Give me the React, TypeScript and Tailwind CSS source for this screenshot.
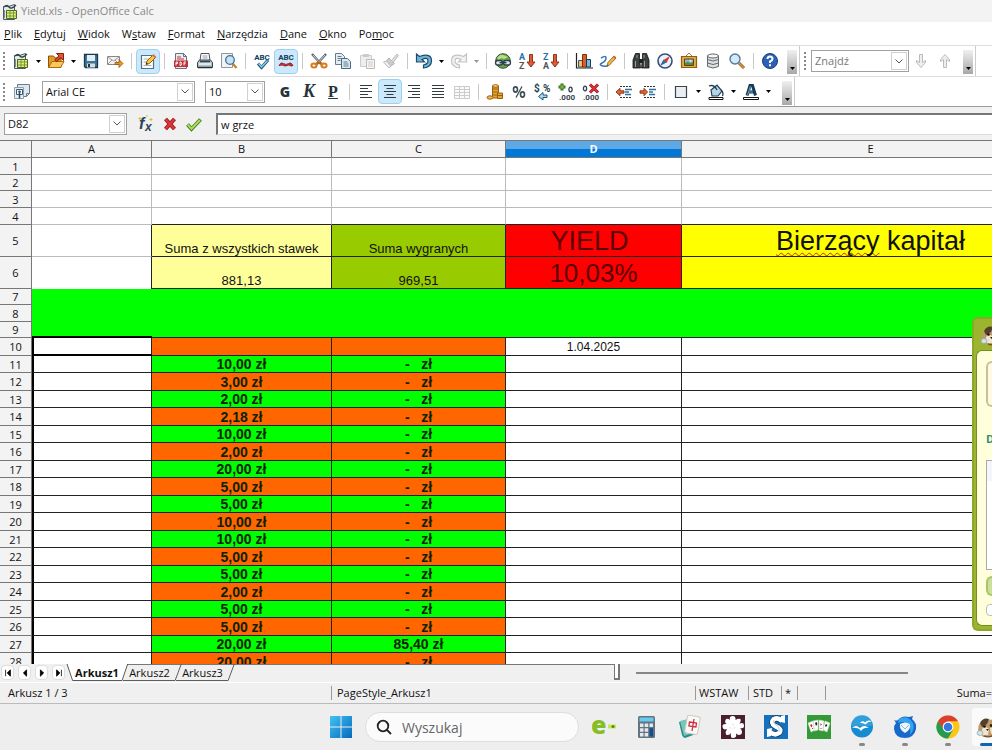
import type { ReactNode } from 'react'
import clsx from 'clsx'

interface IconProps {
  children: ReactNode
  size?: 'sm' | 'lg'
}

/** Toolbar icons are drawn on an 18 unit grid, taskbar icons on a 24 unit grid. */
function Icon({ children, size = 'sm' }: IconProps) {
  return (
    <svg
      viewBox={size === 'sm' ? '0 0 18 18' : '0 0 24 24'}
      className={clsx('shrink-0', size === 'sm' ? 'h-[18px] w-[18px]' : 'h-6 w-6')}
      fill="none"
      aria-hidden="true"
    >
      {children}
    </svg>
  )
}

const calcDoc = (
  <Icon>
    <path d="M2.500 3.500h5l6-2v15h-11z" fill="#e3eaec" stroke="#4c5b62" />
    <path d="M3 4q3-3 5 0t7-2" stroke="#33434b" strokeWidth="1.400" />
    <path d="M3.500 7v8" stroke="#7b8f99" />
    <path d="M5.500 7.500h10v8h-10z" fill="#d9f277" stroke="#4f6420" />
    <path d="M5.500 10h10M5.500 13h10M9 7.500v8M12.500 7.500v8" stroke="#6c8530" strokeWidth=".8" />
  </Icon>
)
const openFolder = (
  <Icon>
    <path d="M1.500 15.500V4h5l1.500 2h6v9.500z" fill="#e39a26" stroke="#8c520a" />
    <path d="M1.500 15.500 5 9.500h12l-3.500 6z" fill="#fcc956" stroke="#a8690f" />
    <path d="m8.500 9 5-5" stroke="#8c1f0c" strokeWidth="3.200" />
    <path d="M9.500 1.500h7v7z" fill="#e0593a" stroke="#8c1f0c" />
    <path d="m9 8.500 5.500-5.500" stroke="#e0593a" strokeWidth="1.600" />
  </Icon>
)
const save = (
  <Icon>
    <path d="M2.500 2.500h13v13h-12l-1-1z" fill="#3f7595" stroke="#16384c" strokeWidth="1.300" />
    <path d="M5 3h8v6H5z" fill="#e2eef5" />
    <path d="M5 11.500h8v4H5z" fill="#d8dde0" />
    <path d="M6 12h2v3H6z" fill="#16384c" />
  </Icon>
)
const mail = (
  <Icon>
    <path d="M1.500 4.500h12v8h-12z" fill="#f4f4f4" stroke="#888" />
    <path d="m2 5 5.500 4L13 5M2 12l4-4m7 4L9 8" stroke="#999" />
    <path d="M9 10.500h4v-3l4 4-4 4v-3H9z" fill="#e8962a" stroke="#93560d" strokeWidth=".8" />
  </Icon>
)
const edit = (
  <Icon>
    <path d="M2.500 3.500h12v13h-12z" fill="#fff" stroke="#52738a" strokeWidth="1.200" />
    <path d="M4.500 7h6M4.500 10h4M4.500 13.500h8" stroke="#9db2c0" />
    <path d="m7 12.500 1-3.500L14 3l2.500 2.500-6 6z" fill="#f8c93a" stroke="#8b6410" />
    <path d="m13 3.500 3 3L17.500 5l-3-3z" fill="#e96a56" />
    <path d="m7 12.500.500-2 1.500 1.500z" fill="#222" />
  </Icon>
)
const pdf = (
  <Icon>
    <path d="M3.500 1.500h8l3 3v12h-11z" fill="#e7ecef" stroke="#65757e" />
    <path d="M11.500 1.500v3h3" stroke="#65757e" />
    <path d="M5 5h4M5 7h7" stroke="#c4303a" />
    <path d="M2 8.500h14v6.500H2z" fill="#c4303a" />
    <path d="M4 13.500V10h1.500v1.500H4M8 10v3.500h1q1.500-1.700 0-3.500zM12 13.500V10h2M12 11.700h1.500" stroke="#fff" strokeWidth=".9" />
  </Icon>
)
const print = (
  <Icon>
    <path d="M5 1.500h8l1 7H4z" fill="#fff" stroke="#49565d" />
    <path d="M6.500 4h5M6.500 6h5" stroke="#999" />
    <path d="M1.500 10.500 3.500 8h11l2 2.500v5h-15z" fill="#b4c1c9" stroke="#31434d" />
    <path d="M4 9.500h10" stroke="#31434d" strokeWidth="1.500" />
    <path d="M3 12h12" stroke="#eef3f5" strokeWidth="1.500" />
    <path d="M2 15.500h14" stroke="#222f36" strokeWidth="1.500" />
  </Icon>
)
const preview = (
  <Icon>
    <path d="M1.500 1.500h11v14h-11z" fill="#f1f3f4" stroke="#8c989f" />
    <path d="m12.500 11.500 4 4.500" stroke="#c8842d" strokeWidth="2.400" />
    <circle cx="10" cy="8" r="4.300" fill="#c5e1f3" stroke="#3f7195" strokeWidth="1.300" />
  </Icon>
)
/** Shared lettering of the two spelling icons. */
const abc = (
  <text x="9" y="8" textAnchor="middle" fontSize="8" fontWeight="700" fill="#173d58" fontFamily="Roboto, sans-serif">
    ABC
  </text>
)
const spell = (
  <Icon>
    {abc}
    <path d="m5 11.500 3.500 4L15 8" stroke="#1c577b" strokeWidth="3" />
    <path d="m5.500 11.500 3 3.500L14.500 8.500" stroke="#8fd0f0" strokeWidth="1.300" />
  </Icon>
)
const autoSpell = (
  <Icon>
    {abc}
    <path d="M2 13.500q2-4 4.500-2t5 0 4.500 2q-2 1-3 0t-3 0-3.500 0-4.500 0z" fill="#c5333a" stroke="#9b2229" />
  </Icon>
)
const cut = (
  <Icon>
    <path d="m2 2 9 10M16 2 7 12" stroke="#54646d" strokeWidth="2.400" />
    <path d="m3 3 7 8M15 3l-7 8" stroke="#dbe3e7" strokeWidth=".9" />
    <path d="m9 10 4 3M9 10l-4 3" stroke="#b86616" strokeWidth="2.600" />
    <ellipse cx="4" cy="13.500" rx="2.600" ry="2" stroke="#d77c1e" strokeWidth="2" />
    <ellipse cx="14" cy="13.500" rx="2.600" ry="2" stroke="#d77c1e" strokeWidth="2" />
  </Icon>
)
const copy = (
  <Icon>
    <path d="M1.500 1.500h6l3 3v8h-9z" fill="#e5edf2" stroke="#607f95" />
    <path d="M3.500 4.500h4M3.500 6.500h4M3.500 8.500h3" stroke="#607f95" />
    <path d="M7.500 6.500h6l3 3v7h-9z" fill="#dce7ee" stroke="#496a80" />
    <path d="M9.500 10h4M9.500 12h5M9.500 14h5" stroke="#607f95" />
  </Icon>
)
const paste = (
  <Icon>
    <path d="M2.500 3.500h11v11h-11z" fill="#eee" stroke="#ccc" />
    <path d="M5 2h6v3H5z" fill="#ccc" />
    <path d="M8.500 7.500h8v9h-8z" fill="#f6f6f6" stroke="#bbb" />
    <path d="M10 10h5M10 12h5M10 14h5" stroke="#ccc" />
  </Icon>
)
const brush = (
  <Icon>
    <path d="m10 8 5-6 1.500 1.500L11.500 10" fill="#ddd" stroke="#bbb" />
    <path d="m7 6 5.500 5.500L9 14 4.500 9z" fill="#ccc" stroke="#b5b5b5" />
    <path d="m4.500 9-3 1 5.500 6 2-2z" fill="#eee" stroke="#bbb" />
  </Icon>
)
/** Hooked arrow with its head at the lower left; redo is the mirrored one. */
const hook = 'M1.500 2v8h8L7 7.500q6-3 6 1.500 0 3-4.500 4v3q8-1 8-7 0-8.500-12-4.500z'
const undo = (
  <Icon>
    <path d={hook} fill="#70b4da" stroke="#1d4c6b" strokeWidth="1.200" />
  </Icon>
)
const redo = (
  <Icon>
    <path d={hook} transform="matrix(-1 0 0 1 18 0)" fill="#f1f1f1" stroke="#c3c3c3" strokeWidth="1.200" />
  </Icon>
)
const hyperlink = (
  <Icon>
    <circle cx="9" cy="9" r="7.300" fill="#6aa648" stroke="#35562c" />
    <path d="M3 6q3-4 6-3t5 2l-4 2-3-1-2 2z" fill="#b8dc90" />
    <rect x="1.500" y="8.500" width="7" height="4.500" rx="2.200" fill="#dfe7eb" stroke="#2b414e" strokeWidth="1.300" />
    <rect x="9.500" y="8.500" width="7" height="4.500" rx="2.200" fill="#dfe7eb" stroke="#2b414e" strokeWidth="1.300" />
    <path d="M5.500 10.700h7" stroke="#2b414e" strokeWidth="1.500" />
  </Icon>
)

function SortIcon({ top, bottom }: { top: string; bottom: string }) {
  return (
    <Icon>
      <text x="1" y="8" fontSize="9" fontWeight="700" fill="#2473a8" fontFamily="Roboto, sans-serif">{top}</text>
      <text x="1" y="17" fontSize="9" fontWeight="700" fill="#555" fontFamily="Roboto, sans-serif">{bottom}</text>
      <path d="M11.500 2.500h3V10h2.500l-4 5-4-5h2.500z" fill="#dc5c37" stroke="#86260f" strokeWidth=".9" />
    </Icon>
  )
}

const chart = (
  <Icon>
    <path d="M1.500 1v15H18" stroke="#222" strokeWidth="1.200" />
    <path d="M3.500 8.500h4V15h-4z" fill="#f0c060" stroke="#355b74" />
    <path d="M7.500 2.500h4V15h-4z" fill="#d66027" stroke="#7d2f0b" />
    <path d="M11.500 7.500h4V15h-4z" fill="#7fb6da" stroke="#123e5a" />
  </Icon>
)
const draw = (
  <Icon>
    <path d="M2 6q5-3 5 0t-4 5 1 3 5-1" stroke="#3775b5" strokeWidth="1.500" />
    <path d="m8 14 1-3.500 6-6.500 2 2-6.500 7z" fill="#f3bc3b" stroke="#8a5b12" strokeWidth=".9" />
    <path d="m14 5 2 2 1.300-1.500-2-2z" fill="#d85e4e" />
  </Icon>
)
const binoculars = (
  <Icon>
    <path d="M3.500 1.500h4v5l1 9.500H1V8zM10.500 1.500h4L17 8v8H9.500l1-9.500z" fill="#3b4042" stroke="#111" strokeWidth=".8" />
    <path d="M7 7h4v4H7z" fill="#222" />
    <path d="M3.500 9v6M12.500 9v6M5 3v3M12 3v3" stroke="#959c9f" />
  </Icon>
)
const compass = (
  <Icon>
    <circle cx="9" cy="9" r="7" fill="#e9f2fa" stroke="#3a4f78" strokeWidth="1.600" />
    <path d="m14 4-3.500 7-3-3z" fill="#d33c23" />
    <path d="m4 14 3.500-6.500 3 3z" fill="#33669f" />
  </Icon>
)
const gallery = (
  <Icon>
    <path d="m6 4 3-3 3 3" stroke="#b37a26" />
    <path d="M1.500 4.500h15v11h-15z" fill="#e4ab44" stroke="#905d14" strokeWidth="1.200" />
    <path d="M4.500 7h9v6.500h-9z" fill="#7fc0e4" stroke="#62400d" />
    <path d="M5 13v-2l3-1.500 2 1.500 3-1v3z" fill="#5b8b35" />
    <circle cx="10.500" cy="8.700" r="1" fill="#fff4a5" />
  </Icon>
)
const database = (
  <Icon>
    <path d="M3.500 4v10.500q5.500 3 11 0V4z" fill="#dcdfe0" stroke="#62696c" />
    <ellipse cx="9" cy="4" rx="5.500" ry="2" fill="#f4f5f5" stroke="#62696c" />
    <path d="M3.500 7.500q5.500 3 11 0M3.500 11q5.500 3 11 0" stroke="#62696c" />
  </Icon>
)
const magnifier = (
  <Icon>
    <path d="m11 11 5 5" stroke="#8c531b" strokeWidth="3" />
    <path d="m11 11 5 5" stroke="#dc9b3d" strokeWidth="1.500" />
    <circle cx="7" cy="7" r="5" fill="#d3eafa" stroke="#537a99" strokeWidth="1.400" />
  </Icon>
)
const help = (
  <Icon>
    <circle cx="9" cy="9" r="7.500" fill="#2b62b8" stroke="#173d7a" />
    <path d="M6.500 7Q6.500 4.500 9 4.500T11.500 7Q11.500 8.500 9 9.500v1.500M9 12.300v2" stroke="#fff" strokeWidth="2" />
  </Icon>
)
const styles = (
  <Icon>
    <path d="M5.500 1.500h12v9l-3 3h-9z" fill="#dfe8ee" stroke="#687d8b" />
    <path d="M17.500 10.500h-3v3" stroke="#687d8b" />
    <path d="M2.500 4.500h9v11h-9z" fill="#e6eef3" stroke="#8ba0ae" />
    <path d="M4.500 6.500h6v5h-6z" fill="#fff" stroke="#3c5a6f" />
    <circle cx="7.500" cy="8.800" r="1.300" fill="#244b67" />
    <path d="M7.500 10v5.500" stroke="#244b67" strokeWidth="1.500" />
  </Icon>
)

const alignLines = {
  left: 'M3 3.500h12M3 6.500h8M3 9.500h12M3 12.500h8M3 15.500h12',
  center: 'M3 3.500h12M5.500 6.500h7M3 9.500h12M5.500 12.500h7M3 15.500h12',
  right: 'M3 3.500h12M7 6.500h8M3 9.500h12M7 12.500h8M3 15.500h12',
  justify: 'M3 3.500h12M3 6.500h12M3 9.500h12M3 12.500h12M3 15.500h12',
}

function AlignIcon({ kind }: { kind: keyof typeof alignLines }) {
  return (
    <Icon>
      <path d={alignLines[kind]} transform="translate(0 -1)" stroke="#303b42" strokeWidth="1.200" />
    </Icon>
  )
}

const mergeCells = (
  <Icon>
    <path d="M1.500 3.500h15v12h-15zM1.500 6.500h15M1.500 9.500h15M1.500 12.500h15M6.500 3.500v12M11.500 3.500v12" fill="#fafafa" stroke="#ccc" />
  </Icon>
)
const coins = (
  <Icon>
    <path d="M6.500 3v12h6V3z" fill="#e7a52b" stroke="#986012" />
    <path d="M6.500 6h6M6.500 9h6M6.500 12h6" stroke="#986012" />
    <ellipse cx="9.500" cy="3" rx="3" ry="1.300" fill="#ffdb72" stroke="#986012" />
    <path d="M11.500 10v5.500h5V10z" fill="#e7a52b" stroke="#986012" />
    <path d="M11.500 12.500h5" stroke="#986012" />
    <ellipse cx="4" cy="14.500" rx="3" ry="1.700" fill="#f4bd45" stroke="#986012" />
  </Icon>
)
const percent = (
  <Icon>
    <ellipse cx="5.500" cy="6.500" rx="2" ry="2.600" stroke="#3b4a53" strokeWidth="1.600" />
    <ellipse cx="12.500" cy="11.500" rx="2" ry="2.600" stroke="#3b4a53" strokeWidth="1.600" />
    <path d="m12 3.500-6 11" stroke="#3b4a53" strokeWidth="1.300" />
  </Icon>
)
const standardFormat = (
  <Icon>
    <text x="0" y="9" fontSize="10" fontWeight="700" fill="#274252" fontFamily="Roboto, sans-serif">$</text>
    <text x="9" y="9" fontSize="10" fontWeight="700" fill="#274252" fontFamily="Roboto, sans-serif">%</text>
    <path d="M13 12H9V9.500l-4.500 4L9 17v-2.500h4z" fill="#a9d6f0" stroke="#1d567d" />
  </Icon>
)
const decimals = (
  <text x="1" y="17" fontSize="8" fontWeight="700" fill="#33434c" fontFamily="Roboto, sans-serif">.000</text>
)
const addDecimal = (
  <Icon>
    <path d="M4 .500v7M.500 4h7" stroke="#2e6b1c" strokeWidth="3" />
    <path d="M4 1.500v5M1.500 4h5" stroke="#8bcf55" />
    <ellipse cx="12.500" cy="6.500" rx="1.600" ry="2.300" stroke="#33434c" strokeWidth="1.300" />
    {decimals}
  </Icon>
)
const deleteDecimal = (
  <Icon>
    <ellipse cx="3" cy="5.500" rx="1.600" ry="2.300" stroke="#33434c" strokeWidth="1.300" />
    {decimals}
    <path d="m8 1.500 8 8m0-8-8 8" stroke="#8d1115" strokeWidth="3" />
    <path d="m8 1.500 8 8m0-8-8 8" stroke="#d8333a" strokeWidth="1.800" />
  </Icon>
)

function IndentIcon({ increase = false }: { increase?: boolean }) {
  return (
    <Icon>
      <path d="M5 3.500h12M5 14.500h12" stroke="#333" strokeDasharray="2 1" />
      <path d="M10 6.500h7M10 9h4M10 11.500h6" stroke="#2f719d" strokeWidth="1.400" />
      <path
        d={increase ? 'M1 7.800h4V5.300L8.500 9 5 12.700v-2.500H1z' : 'M9 7.800H5V5.300L1 9l4 3.700v-2.500h4z'}
        fill="#e16a3a"
        stroke="#8a2c10"
        strokeWidth=".9"
      />
    </Icon>
  )
}

const borders = (
  <Icon>
    <path d="M3.500 3.500h11v11h-11z" fill="#e8eef3" stroke="#3a454c" strokeWidth="1.200" />
  </Icon>
)
const fillColor = (
  <Icon>
    <path d="M2 14.500h14v2H2z" fill="#fff" stroke="#111" />
    <path d="m4 7 6-5 5 6-4 5H5z" fill="#b5d3e6" stroke="#233f51" strokeWidth="1.200" />
    <path d="M2 3q5-2 8 4M14 7q3 3 1.500 6" stroke="#233f51" strokeWidth="1.300" />
  </Icon>
)
const fontColor = (
  <Icon>
    <path d="M1.500 14.500h15v2h-15z" fill="#fff" stroke="#111" />
    <path d="M5 12.500 8 2.500h2.500l3 10M6.500 9h5.500" stroke="#173b55" strokeWidth="3" />
    <path d="M5.500 12 8.500 3M7 9h4" stroke="#6aa3c8" />
  </Icon>
)
const functionIcon = (
  <Icon>
    <text x="2" y="14" fontSize="16" fontStyle="italic" fontWeight="700" fill="#29455a" fontFamily="Liberation Sans, sans-serif">f</text>
    <text x="8" y="16" fontSize="12" fontStyle="italic" fontWeight="700" fill="#29455a" fontFamily="Liberation Sans, sans-serif">x</text>
    <path d="M3 2v3M1.500 3.500h3M14 3v3M12.500 4.500h3M10 0v2" stroke="#e3b62f" />
  </Icon>
)
const cancel = (
  <Icon>
    <path d="m4.500 4 9 10m0-10-9 10" stroke="#8d1115" strokeWidth="4" />
    <path d="m4.500 4 9 10m0-10-9 10" stroke="#e2363a" strokeWidth="2.200" />
  </Icon>
)
const accept = (
  <Icon>
    <path d="m2.500 9.500 4 4.500 9-9.500" stroke="#47781c" strokeWidth="3.800" />
    <path d="m2.800 9.700 3.700 4 8.500-8.700" stroke="#a8e05d" strokeWidth="2" />
  </Icon>
)

function ArrowIcon({ up = false }: { up?: boolean }) {
  return (
    <Icon>
      <path
        d={up ? 'M7.500 15.500v-8l-3 2V7.500L9 2.500l4.500 5v2l-3-2v8z' : 'M7.500 2.500v8l-3-2v2l4.500 5 4.500-5v-2l-3 2v-8z'}
        fill="#eee"
        stroke="#bbb"
      />
    </Icon>
  )
}

interface ToolProps {
  label: string
  active?: boolean
  children: ReactNode
}

function Tool({ label, active, children }: ToolProps) {
  return (
    <button
      type="button"
      aria-label={label}
      title={label}
      aria-pressed={active}
      className={clsx(
        'flex h-[25px] w-6 shrink-0 items-center justify-center text-[#26333b]',
        active && 'rounded-sm border border-[#9fd0f2] bg-[#cce8fb]',
      )}
    >
      {children}
    </button>
  )
}

function DropArrow({ label, muted }: { label: string; muted?: boolean }) {
  return (
    <button type="button" aria-label={label} className="flex h-6 w-[11px] shrink-0 items-center justify-center">
      <svg viewBox="0 0 5 3" className={clsx('h-[3px] w-[5px]', muted ? 'fill-[#999]' : 'fill-black')} aria-hidden="true">
        <path d="M0 0h5L2.500 3z" />
      </svg>
    </button>
  )
}

function Sep() {
  return (
    <div className="flex h-4 w-[9px] shrink-0 justify-center">
      <div className="w-px bg-[#c8c8c8]" />
    </div>
  )
}

function Grip() {
  return <div className="h-[18px] w-0 shrink-0 border-l-2 border-dotted border-[#888]" />
}

function Overflow({ label }: { label: string }) {
  return (
    <button
      type="button"
      aria-label={label}
      className="flex h-6 w-[10px] shrink-0 items-end justify-center self-end bg-linear-to-b from-[#f0f0f0] to-[#a8a8a8] pb-1"
    >
      <svg viewBox="0 0 5 3" className="h-[3px] w-[5px] fill-black" aria-hidden="true">
        <path d="M0 0h5L2.500 3z" />
      </svg>
    </button>
  )
}

interface ComboProps {
  label: string
  value: string
  className: string
}

function Combo({ label, value, className }: ComboProps) {
  return (
    <div className={clsx('relative h-[22px] shrink-0', className)}>
      <select
        aria-label={label}
        defaultValue={value}
        className="h-full w-full appearance-none border border-[#a0a0a0] bg-white pt-px pl-[3px] text-[11px] text-inherit"
      >
        <option>{value}</option>
      </select>
      <span className="pointer-events-none absolute top-[2px] right-[2px] flex h-[18px] w-4 items-center justify-center border border-[#d0d0d0] bg-white">
        <svg viewBox="0 0 8 5" className="h-[5px] w-2" fill="none" stroke="#555" aria-hidden="true">
          <path d="m.500.500 3.500 3.500L7.500.500" />
        </svg>
      </span>
    </div>
  )
}

// before, mnemonic letter, after
const menus = [
  ['', 'P', 'lik'],
  ['', 'E', 'dytuj'],
  ['', 'W', 'idok'],
  ['W', 's', 'taw'],
  ['', 'F', 'ormat'],
  ['', 'N', 'arzędzia'],
  ['', 'D', 'ane'],
  ['', 'O', 'kno'],
  ['Po', 'm', 'oc'],
]

function StandardToolbar() {
  return (
    <div className="flex h-[31px] items-center border-t border-[#ddd]">
      <div className="flex h-full items-center border-r border-[#ccc] pr-[2px] pl-[3px]">
        <Grip />
        <div className="ml-1 flex items-center">
          <Tool label="Nowy">{calcDoc}</Tool>
          <DropArrow label="Nowy: opcje" />
          <Tool label="Otwórz">{openFolder}</Tool>
          <DropArrow label="Otwórz: opcje" />
          <Tool label="Zapisz">{save}</Tool>
          <Tool label="E-mail">{mail}</Tool>
          <Sep />
          <Tool label="Edytuj plik" active>{edit}</Tool>
          <Sep />
          <Tool label="Eksportuj jako PDF">{pdf}</Tool>
          <Tool label="Drukuj">{print}</Tool>
          <Tool label="Podgląd strony">{preview}</Tool>
          <Sep />
          <Tool label="Sprawdź pisownię">{spell}</Tool>
          <Tool label="Autosprawdzanie pisowni" active>{autoSpell}</Tool>
          <Sep />
          <Tool label="Wytnij">{cut}</Tool>
          <Tool label="Kopiuj">{copy}</Tool>
          <Tool label="Wklej">{paste}</Tool>
          <Tool label="Malarz formatów">{brush}</Tool>
          <Sep />
          <Tool label="Cofnij">{undo}</Tool>
          <DropArrow label="Cofnij: lista" />
          <Tool label="Ponów">{redo}</Tool>
          <DropArrow label="Ponów: lista" muted />
          <Sep />
          <Tool label="Hiperłącze">{hyperlink}</Tool>
          <Tool label="Sortuj rosnąco"><SortIcon top="A" bottom="Z" /></Tool>
          <Tool label="Sortuj malejąco"><SortIcon top="Z" bottom="A" /></Tool>
          <Sep />
          <Tool label="Wykres">{chart}</Tool>
          <Tool label="Rysunek">{draw}</Tool>
          <Sep />
          <Tool label="Znajdź i zamień">{binoculars}</Tool>
          <Tool label="Nawigator">{compass}</Tool>
          <Tool label="Galeria">{gallery}</Tool>
          <Tool label="Źródła danych">{database}</Tool>
          <Tool label="Powiększenie">{magnifier}</Tool>
          <Sep />
          <Tool label="Pomoc">{help}</Tool>
        </div>
        <div className="ml-[5px] flex h-full items-end pb-[2px]">
          <Overflow label="Więcej poleceń" />
        </div>
      </div>
      <div className="flex h-full items-center border-r border-[#ccc] pr-[2px] pl-1">
        <Grip />
        <div className="ml-[5px] text-[#777]">
          <Combo label="Znajdź" value="Znajdź" className="w-[98px]" />
        </div>
        <Tool label="Znajdź następny"><ArrowIcon /></Tool>
        <Tool label="Znajdź poprzedni"><ArrowIcon up /></Tool>
        <div className="ml-[6px] flex h-full items-end pb-[2px]">
          <Overflow label="Więcej opcji szukania" />
        </div>
      </div>
    </div>
  )
}

function FormatToolbar() {
  return (
    <div className="flex h-[31px] items-center border-t border-b border-t-[#ddd] border-b-[#999]">
      <div className="flex h-full items-center border-r border-[#ccc] pr-[2px] pl-[3px]">
        <Grip />
        <div className="ml-1 flex items-center">
          <Tool label="Style i formatowanie">{styles}</Tool>
          <div className="flex gap-[10px] pr-2 pl-[9px]">
            <Combo label="Czcionka" value="Arial CE" className="w-[153px]" />
            <Combo label="Rozmiar" value="10" className="w-[60px]" />
          </div>
          <Tool label="Pogrubienie"><b className="font-['Open_Sans',sans-serif] text-[14px] font-extrabold">G</b></Tool>
          <Tool label="Kursywa"><i className="font-['Liberation_Serif',serif] text-[18px] font-bold">K</i></Tool>
          <Tool label="Podkreślenie"><span className="font-['Liberation_Serif',serif] text-[16px] font-bold underline">P</span></Tool>
          <Sep />
          <Tool label="Do lewej"><AlignIcon kind="left" /></Tool>
          <Tool label="Do środka" active><AlignIcon kind="center" /></Tool>
          <Tool label="Do prawej"><AlignIcon kind="right" /></Tool>
          <Tool label="Wyjustuj"><AlignIcon kind="justify" /></Tool>
          <Tool label="Scal komórki">{mergeCells}</Tool>
          <Sep />
          <Tool label="Waluta">{coins}</Tool>
          <Tool label="Procent">{percent}</Tool>
          <Tool label="Format standardowy">{standardFormat}</Tool>
          <Tool label="Dodaj miejsce dziesiętne">{addDecimal}</Tool>
          <Tool label="Usuń miejsce dziesiętne">{deleteDecimal}</Tool>
          <Sep />
          <Tool label="Zmniejsz wcięcie"><IndentIcon /></Tool>
          <Tool label="Zwiększ wcięcie"><IndentIcon increase /></Tool>
          <Sep />
          <Tool label="Krawędzie">{borders}</Tool>
          <DropArrow label="Krawędzie: opcje" />
          <Tool label="Kolor tła">{fillColor}</Tool>
          <DropArrow label="Kolor tła: opcje" />
          <Tool label="Kolor czcionki">{fontColor}</Tool>
          <DropArrow label="Kolor czcionki: opcje" />
        </div>
        <div className="ml-2 flex h-full items-end pb-px">
          <Overflow label="Więcej formatowania" />
        </div>
      </div>
    </div>
  )
}

function FormulaBar() {
  return (
    <div className="flex h-[33px] items-center bg-[#f0f0f0] pl-1">
      <Combo label="Pole nazwy" value="D82" className="w-[123px]" />
      <div className="ml-[7px] flex">
        <Tool label="Kreator funkcji">{functionIcon}</Tool>
        <Tool label="Anuluj">{cancel}</Tool>
        <Tool label="Zastosuj">{accept}</Tool>
      </div>
      <input
        aria-label="Wiersz wprowadzania"
        defaultValue="w grze"
        className="ml-[10px] h-[22px] min-w-0 flex-1 border-t-2 border-b border-l-2 border-t-[#777] border-b-[#ddd] border-l-[#777] bg-white pl-[3px] text-[11px]"
      />
    </div>
  )
}

interface Row {
  n: number
  height: string
  stake?: string
  win?: string
  date?: string
}

const emptyHeights = ['h-[17px]', 'h-4', 'h-[17px]', 'h-[17px]']
const bandHeights = ['h-4', 'h-[17px]', 'h-4']
const stakes = [
  '10,00', '3,00', '2,00', '2,18', '10,00', '2,00', '20,00', '5,00', '5,00',
  '10,00', '10,00', '5,00', '5,00', '2,00', '5,00', '5,00', '20,00', '20,00',
]

const betRows: Row[] = [
  { n: 10, height: 'h-[18px]', date: '1.04.2025' },
  ...stakes.map((stake, i) => ({
    n: 11 + i,
    height: i % 2 === 0 ? 'h-[17px]' : 'h-[18px]',
    stake: `${stake} zł`,
    win: 11 + i === 27 ? '85,40 zł' : '-   zł',
  })),
]

function RowHead({ n }: { n: number }) {
  return (
    <th
      scope="row"
      className="border-r border-b border-[#777] bg-[#f3f3f3] p-0 align-middle font-['Open_Sans',sans-serif] text-[11px] leading-[15px] font-normal"
    >
      {n}
    </th>
  )
}

function Sheet() {
  const plain = 'border-r border-b border-[#bbb] p-0'
  const framed = 'border-r border-b border-[#222] p-0'
  const money = 'pt-px text-[14px] leading-[15px] font-bold text-[#0d2200]'
  return (
    <div className="min-h-0 flex-1 overflow-hidden bg-white">
      <table className="w-[1060px] table-fixed border-separate border-spacing-0 text-center font-['Liberation_Sans',Arial,sans-serif]">
        <colgroup>
          <col className="w-8" />
          <col className="w-[120px]" />
          <col className="w-[180px]" />
          <col className="w-[174px]" />
          <col className="w-44" />
          <col />
        </colgroup>
        <thead>
          <tr className="h-[18px] font-['Open_Sans',sans-serif] text-[11px] leading-4">
            <td className="border-t border-r border-b border-[#777] bg-[#f3f3f3] p-0" />
            {['A', 'B', 'C', 'D', 'E'].map((col) => (
              <th
                key={col}
                scope="col"
                className={clsx(
                  'border-t border-r border-b border-[#777] p-0',
                  col === 'D'
                    ? 'bg-linear-to-b from-[#5ea8e6] from-50% to-[#0078d7] to-50% font-bold text-white'
                    : 'bg-[#f3f3f3] font-normal',
                )}
              >
                {col}
              </th>
            ))}
          </tr>
        </thead>
        <tbody>
          {emptyHeights.map((height, i) => (
            <tr key={i} className={height}>
              <RowHead n={i + 1} />
              <td className={plain} />
              {['B', 'C', 'D', 'E'].map((col) => (
                <td key={col} className={clsx(plain, i === 3 && 'border-b-[#222]')} />
              ))}
            </tr>
          ))}
          <tr className="h-8 align-bottom text-[13px] leading-[15px]">
            <RowHead n={5} />
            <td className={clsx(plain, 'border-r-[#222]')} />
            <td className={clsx(framed, 'bg-[#ffff99]')}>Suma z wszystkich stawek</td>
            <td className={clsx(framed, 'bg-[#99cc00]')}>Suma wygranych</td>
            <td className={clsx(framed, 'bg-[#ff0000] pr-2 text-[27px] leading-[30px] text-[#5a0000]')}>YIELD</td>
            <td className={clsx(framed, 'bg-[#ffff00] text-[27px] leading-[30px]')}>
              <span className="underline decoration-[#c03000] decoration-wavy decoration-1 underline-offset-2 [text-decoration-skip-ink:none]">
                Bierzący
              </span>{' '}
              kapitał
            </td>
          </tr>
          <tr className="h-8 align-bottom text-[13px] leading-[15px]">
            <RowHead n={6} />
            <td className="border-r border-[#222] p-0" />
            <td className={clsx(framed, 'bg-[#ffff99]')}>881,13</td>
            <td className={clsx(framed, 'bg-[#99cc00]')}>969,51</td>
            <td className={clsx(framed, 'bg-[#ff0000] text-[26px] leading-[30px] text-[#5a0000]')}>10,03%</td>
            <td className={clsx(framed, 'bg-[#ffff00]')} />
          </tr>
          {bandHeights.map((height, i) => (
            <tr key={i} className={height}>
              <RowHead n={i + 7} />
              {i === 0 && (
                <>
                  <td rowSpan={3} className="border-b-2 border-black bg-[#00ff00] p-0" />
                  <td rowSpan={3} colSpan={4} className="border-b border-[#222] bg-[#00ff00] p-0" />
                </>
              )}
            </tr>
          ))}
          {betRows.map((row) => {
            const band = row.n % 2 === 0 ? 'bg-[#ff6600]' : 'bg-[#00ff00]'
            return (
              <tr key={row.n} className={row.height}>
                <RowHead n={row.n} />
                <td className={clsx(framed, 'border-l-2 border-l-black', row.n === 10 && 'border-b-2 border-b-black')} />
                <td className={clsx(framed, band, money)}>{row.stake}</td>
                <td className={clsx(framed, band, money, 'whitespace-pre')}>{row.win}</td>
                <td className={clsx(framed, 'pt-px text-[12px] leading-[15px]')}>{row.date}</td>
                <td className={framed} />
              </tr>
            )
          })}
        </tbody>
      </table>
    </div>
  )
}

const navIcons = [
  { label: 'Pierwszy arkusz', d: 'M2 1v8M8 1 4 5l4 4z' },
  { label: 'Poprzedni arkusz', d: 'M7 1 3 5l4 4z' },
  { label: 'Następny arkusz', d: 'm3 1 4 4-4 4z' },
  { label: 'Ostatni arkusz', d: 'M8 1v8M2 1l4 4-4 4z' },
]

function SheetTabs() {
  return (
    <div className="flex h-[18px] shrink-0 bg-[#f0f0f0]">
      <div className="flex h-[17px] w-[67px] shrink-0 items-center gap-1 pl-px">
        {navIcons.map((nav) => (
          <button
            key={nav.label}
            type="button"
            aria-label={nav.label}
            className="flex h-[15px] w-[13px] items-center justify-center rounded border border-[#ddd] bg-white"
          >
            <svg viewBox="0 0 10 10" className="h-2 w-2 shrink-0 fill-black stroke-black" aria-hidden="true">
              <path d={nav.d} />
            </svg>
          </button>
        ))}
      </div>
      <div className="flex w-[547px] shrink-0 border-t border-[#777]">
        {['Arkusz1', 'Arkusz2', 'Arkusz3'].map((name, i) => (
          <button
            key={name}
            type="button"
            className={clsx('relative h-4 text-[11px] leading-4', i === 0 ? 'w-14 font-bold' : 'w-[53px]')}
          >
            <svg viewBox="0 0 60 16" preserveAspectRatio="none" className="absolute inset-0 h-full w-full overflow-visible" aria-hidden="true">
              <path d={i === 0 ? 'M0-1 6 15.500H59L65-1' : 'M0 15.500H59L66-1'} fill={i === 0 ? '#fff' : 'none'} stroke="#555" />
            </svg>
            <span className={clsx('relative', i === 0 && 'pl-1')}>{name}</span>
          </button>
        ))}
      </div>
      <div className="h-4 w-[6px] shrink-0 border-r-2 border-b-2 border-l border-[#777] bg-white" />
      <div className="flex flex-1 items-center pr-[84px] pl-4">
        <div className="h-[2px] w-full bg-[#858585]" />
      </div>
    </div>
  )
}

function StatusBar() {
  const cell = 'my-[3px] flex shrink-0 items-center border-r border-[#999]'
  return (
    <div className="flex h-[22px] shrink-0 overflow-hidden border-t border-b border-t-white border-b-[#bbb] bg-[#f0f0f0]">
      <div className={clsx(cell, 'w-[332px] pl-2')}>Arkusz 1 / 3</div>
      <div className={clsx(cell, 'w-[364px] pl-[5px]')}>PageStyle_Arkusz1</div>
      <div className={clsx(cell, 'w-[53px] pl-[3px]')}>WSTAW</div>
      <div className={clsx(cell, 'w-[33px] pl-1')}>STD</div>
      <div className={clsx(cell, 'w-4 pl-[3px]')}>*</div>
      <div className={clsx(cell, 'w-7')} />
      <div className="flex flex-1 items-center justify-end">Suma=</div>
    </div>
  )
}

const dog = (
  <>
    <path d="M2 15q0-8 7-10 8-2 11 3l4 2v8l-7 4H7z" fill="#c29a68" />
    <path d="M4 8q3-6 9-4l-2 5-5 3zM16 7q5-2 8 3l-4 3z" fill="#51402e" />
    <path d="M6 14q3-4 7 0l-1 6H6zM14 13l6-1v5l-5 2z" fill="#f0e4cd" />
    <circle cx="8.500" cy="11.500" r="1.300" fill="#111" />
    <circle cx="15" cy="10.500" r="1.300" fill="#111" />
    <path d="M10 14h3l-1.500 2z" fill="#222" />
    <ellipse cx="4" cy="18" rx="3" ry="2.500" fill="#cfe3ea" stroke="#7d98a3" strokeWidth=".6" />
    <path d="M8 21q5 2 10-1" stroke="#6d4c2a" strokeWidth="1.300" />
  </>
)

const taskbarApps = [
  {
    label: 'e-',
    art: (
      <>
        <text x="-1" y="19" fontSize="25" fontWeight="800" fill="#87bd25" fontFamily="Open Sans, sans-serif">e</text>
        <path d="M16 9.500h8v4h-8z" fill="#c5e85b" />
        <circle cx="21" cy="11.500" r="1.600" fill="#568a1c" />
      </>
    ),
  },
  {
    label: 'Kalkulator',
    art: (
      <>
        <rect x="3" y="1" width="17" height="22" rx="1.500" fill="#65737e" />
        <path d="M4.500 2.500h14v4h-14z" fill="#62cdf0" />
        <path d="M5 8.500h3.500v3.500H5zM9.700 8.500h3.500v3.500H9.700zM14.500 8.500H18v3.500h-3.500zM5 13.200h3.500v3.500H5zM9.700 13.200h3.500v3.500H9.700zM5 18h3.500v3.500H5zM9.700 18h3.500v3.500H9.700z" fill="#e3e9ed" />
        <path d="M14.500 13.200H18v8.300h-3.500z" fill="#164e91" />
      </>
    ),
  },
  {
    label: 'Mahjong',
    art: (
      <>
        <path d="m1 7 13-4 4 16-11 4q-2 0-3-3z" fill="#258f88" />
        <path d="m2 6 12-3 4 14-12 4z" fill="#75c6b8" />
        <rect x="8" y="1" width="13" height="18" rx="2" fill="#f8f8f5" stroke="#c8cac5" transform="rotate(10 15 10)" />
        <path d="m11.500 7 7 1-.600 4-7-1zM16 4l-2 12" stroke="#d22c42" strokeWidth="1.300" />
      </>
    ),
  },
  {
    label: 'Puzzle',
    art: (
      <>
        <path d="M0 0h24v24H0z" fill="#4b1e2e" />
        <path
          d="M5 4q2-1 4 1-1-4 2.500-4t3 4q3-2 5-1 1 2-1 4.500 4-1.500 4.500 1.500.500 4-4 3 3 3 1.500 6-3 2-5.500-.500 1 4-2.500 4.500T10 18q-2 3-5 1.500-1-3 1-5.500-4 1.500-4.500-2T5.500 9Q3 7 5 4z"
          fill="#fff"
        />
        <path d="m11 9 2 1M9 12l1 2M14 12l-1 2" stroke="#d9cdd1" strokeWidth=".7" />
      </>
    ),
  },
  {
    label: 'Solitaire',
    art: (
      <>
        <path d="M0 0h24v24H0z" fill="#1571bd" />
        <path d="M18 6q-4-4-8-2-4 4 1 7 8 3 4 7-4 3-9-1" stroke="#0b3560" strokeWidth="6" />
        <path d="M18 6q-4-4-8-2-4 4 1 7 8 3 4 7-4 3-9-1" stroke="#fff" strokeWidth="4.600" />
        <path d="m17 1 4-1v8l-4-1M3 14l5-1-1 8-4 1" fill="#fff" />
        <path d="M10 5q-2 3 2 5t3 7" stroke="#9fc4e3" strokeWidth=".8" />
      </>
    ),
  },
  {
    label: 'Karty',
    art: (
      <>
        <path d="M0 0h24v24H0z" fill="#349a38" />
        <path d="m1 8 5-2 2 9-4 2zM6 6l5-1v10l-4 1zM12 5l5 1-1 10-4-1zM18 6l5 2-3 9-4-2z" fill="#fff" stroke="#c8dcc8" strokeWidth=".6" />
        <path d="m3 10 1.500-1 1 2-1 1.500zM13.500 8l1.500 1.500-1.500 1.500z" fill="#cd2834" />
        <path d="m8 8 1.500-1 1 2-1.500 2zM19 9l1.500 1-1.500 2-1-1z" fill="#222" />
        <path d="m5 14 1-1M14 13v1" stroke="#cd2834" />
      </>
    ),
  },
  {
    label: 'OpenOffice',
    running: true,
    art: (
      <>
        <circle cx="12" cy="11.500" r="11" fill="#168bd0" />
        <path d="M4 3.500a11 11 0 0 1 16 0L23 11H1z" fill="#43aee4" opacity=".6" />
        <path d="M10 8q2-3 5-.500Q18 4 22 6.500q-4-.500-6.500 3-2-2-5.500-1.500zM2 13q4-4 8 0 4-4 9 0-5-1-8 3-3-4-9-3z" fill="#fff" />
      </>
    ),
  },
  {
    label: 'Thunderbird',
    running: true,
    art: (
      <>
        <path d="M1 5q2 1 4 0 4-5 11-3l4-1-1 3q5 4 4 10-2 9-11 9Q2 23 1 14q0-4 2-6z" fill="#1768cb" />
        <path d="M6 4q8-5 14 4 2 7-3 12 2-11-7-13-3 0-5 1z" fill="#35a3eb" />
        <path d="M7 9q5-3 10 0 1 6-5 9-6-3-5-9z" fill="#eaf5ff" />
        <path d="m8 10 4 4 4-4" stroke="#8db4df" />
      </>
    ),
  },
  {
    label: 'Chrome',
    running: true,
    art: (
      <>
        <circle cx="12" cy="12" r="11.500" fill="#fbc617" />
        <path d="M2 6.200A11.500 11.500 0 0 1 22 6.200H12L7 15z" fill="#dc3f32" />
        <path d="M2 6.200A11.500 11.500 0 0 0 12 23.500l5-8.700-8 1.400z" fill="#259b50" />
        <circle cx="12" cy="12" r="5.400" fill="#fff" />
        <circle cx="12" cy="12" r="4.300" fill="#3478e5" />
      </>
    ),
  },
]

function Taskbar() {
  return (
    <nav aria-label="Pasek zadań" className="flex h-[46px] shrink-0 items-center overflow-hidden bg-[#eee] pl-[319px]">
      <button type="button" aria-label="Start" className="flex w-[43px] shrink-0 justify-center">
        <Icon size="lg">
          <defs>
            <linearGradient id="winTile" x2="1" y2="1">
              <stop stopColor="#43c2f3" />
              <stop offset="1" stopColor="#0569bd" />
            </linearGradient>
          </defs>
          <path d="M1 1h10.500v10.500H1zM12.500 1H23v10.500H12.500zM1 12.500h10.500V23H1zM12.500 12.500H23V23H12.500z" fill="url(#winTile)" />
        </Icon>
      </button>
      <label className="mx-[3px] flex h-[30px] w-[214px] shrink-0 items-center gap-[10px] rounded-full border border-[#ddd] bg-[#fbfbfb] pl-[10px]">
        <svg viewBox="0 0 16 16" className="h-4 w-4 shrink-0" fill="none" stroke="#222" strokeWidth="1.800" aria-hidden="true">
          <circle cx="7" cy="7" r="5.300" />
          <path d="m11 11 4 4" />
        </svg>
        <input type="search" aria-label="Wyszukaj" placeholder="Wyszukaj" className="w-full min-w-0 bg-transparent text-[14px] placeholder:text-[#666]" />
      </label>
      {taskbarApps.map((app) => (
        <button key={app.label} type="button" aria-label={app.label} className="relative flex w-[43px] shrink-0 justify-center">
          <Icon size="lg">{app.art}</Icon>
          {app.running && <span className="absolute -bottom-[7px] h-[3px] w-[6px] rounded-full bg-[#888]" />}
        </button>
      ))}
      <button type="button" aria-label="Gra" className="relative ml-[3px] flex h-[38px] w-8 shrink-0 items-center justify-center rounded bg-[#fafafa]">
        <Icon size="lg">{dog}</Icon>
        <span className="absolute bottom-0 h-[3px] w-4 rounded-full bg-[#0b67b5]" />
      </button>
    </nav>
  )
}

/** Game window that hangs over the right edge of the sheet. */
function GameWindow() {
  return (
    <aside className="absolute top-[317px] right-0 flex h-[314px] w-5 flex-col overflow-hidden rounded-l-md border-2 border-r-0 border-[#8da72a] bg-[#9db52e]">
      <div className="flex h-[31px] shrink-0 items-center pl-[6px]">
        <Icon size="lg">{dog}</Icon>
      </div>
      <div className="mb-[3px] ml-[2px] flex flex-1 flex-col rounded-l-md border border-r-0 border-[#758c20] bg-[#ffffdc] pl-[9px]">
        <div className="mt-[10px] h-[46px] rounded-l-md border-2 border-r-0 border-[#c9bf98] bg-[#fffbe2]" />
        <div className="mt-6 text-[11px] leading-4 font-bold text-[#2d8f76]">D</div>
        <div className="mt-[13px] h-[110px] border border-r-0 border-[#aaa] bg-white">
          <div className="h-5 bg-[#f4f4fb]" />
        </div>
        <button type="button" aria-label="Graj" className="mt-[6px] h-5 shrink-0 rounded-l-lg border-2 border-r-0 border-[#a7c46b] bg-[#cbe19a]" />
        <input type="checkbox" aria-label="Opcja" className="mt-2 h-3 w-3 shrink-0 appearance-none rounded-sm border border-[#bbb] bg-white" />
      </div>
    </aside>
  )
}

export default function App() {
  return (
    <div className="relative flex h-screen flex-col overflow-hidden bg-white font-['Open_Sans',sans-serif] text-[11px] text-[#111]">
      <header className="shrink-0">
        <div className="flex h-[22px] items-center gap-[2px] bg-[#f3f3f3] pt-px pl-px text-[#8a8a8a]">
          {calcDoc}
          <h1>Yield.xls - OpenOffice Calc</h1>
        </div>
        <nav aria-label="Menu" className="flex h-[23px] items-center gap-3 pt-px pl-1">
          {menus.map(([before, key, after]) => (
            <button key={key + after} type="button">
              {before}
              <span className="underline">{key}</span>
              {after}
            </button>
          ))}
        </nav>
        <StandardToolbar />
        <FormatToolbar />
        <FormulaBar />
      </header>
      <Sheet />
      <SheetTabs />
      <StatusBar />
      <Taskbar />
      <GameWindow />
    </div>
  )
}
